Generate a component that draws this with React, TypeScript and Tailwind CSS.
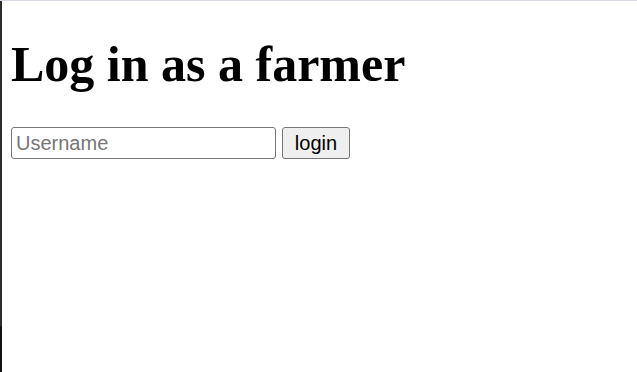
import React from "react";

export default function App() {
  return (
    <div className="w-[637px] h-[372px] bg-white border-t border-[#dcd8e6] flex overflow-hidden">
      <div className="w-[2px] h-full flex flex-col">
        <div className="flex-1 bg-[#2b2b2b]" />
        <div className="h-[46px] bg-[#111015]" />
      </div>
      <div className="flex-1 pl-[9px]">
        <h1
          className="mt-[35px] text-[50px] leading-[56px] font-bold text-black"
          style={{ fontFamily: '"Liberation Serif", "Times New Roman", serif' }}
        >
          Log in as a farmer
        </h1>
        <div className="mt-[35px] flex items-center gap-[6px]">
          <input
            type="text"
            placeholder="Username"
            className="w-[265px] h-[32px] border border-[#767676] rounded-[3px] px-[4px] text-[20px] text-black placeholder:text-[#767676] outline-none"
            style={{ fontFamily: '"Liberation Sans", Arial, sans-serif' }}
          />
          <button
            className="w-[68px] h-[32px] border border-[#767676] rounded-[3px] bg-[#efefef] text-[20px] text-black flex items-center justify-center"
            style={{ fontFamily: '"Liberation Sans", Arial, sans-serif' }}
          >
            login
          </button>
        </div>
      </div>
    </div>
  );
}
